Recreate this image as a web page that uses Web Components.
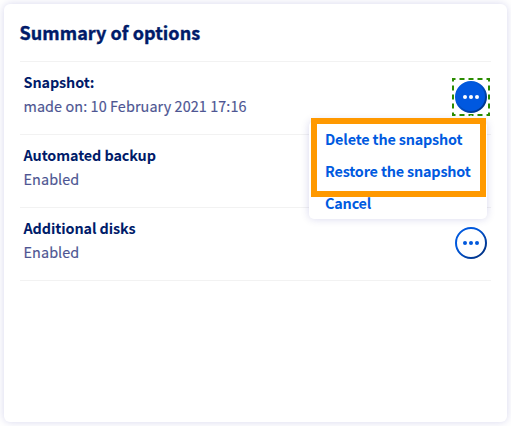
<!DOCTYPE html>
<html lang="en">
<head>
<meta charset="utf-8">
<title>Summary of options</title>
<style>
body { margin: 0; background: #fff; font-family: "Noto Sans CJK SC", "Noto Sans", sans-serif; color: #001b69; overflow: hidden; }
</style>
</head>
<body>
<summary-card heading="Summary of options">
  <option-row label="Snapshot:" value="made on: 10 February 2021 17:16">
    <more-button slot="action" active></more-button>
    <action-menu slot="menu">
      <menu-entry>Delete the snapshot</menu-entry>
      <menu-entry>Restore the snapshot</menu-entry>
      <menu-entry>Cancel</menu-entry>
    </action-menu>
  </option-row>
  <option-row label="Automated backup" value="Enabled"></option-row>
  <option-row label="Additional disks" value="Enabled">
    <more-button slot="action"></more-button>
  </option-row>
</summary-card>
<script>
class SummaryCard extends HTMLElement {
  connectedCallback() {
    this.attachShadow({ mode: "open" }).innerHTML = `
      <style>
        :host { display: block; box-sizing: border-box; width: 503px; height: 418px; margin: 4px; padding: 0 16px;
          background: #fff; border-radius: 6px; box-shadow: 0 0 8px rgba(0, 0, 140, .16); }
        h2 { margin: 0 0 0 -.5px; height: 57px; line-height: 57px; font-size: 18px; font-weight: 700; white-space: nowrap;
          letter-spacing: .06px; -webkit-text-stroke: .4px currentColor; }
        .rows { border-bottom: 1px solid #f2f2f2; width: 471px; }
      </style>
      <h2></h2><div class="rows"><slot></slot></div>`;
    this.shadowRoot.querySelector("h2").textContent = this.getAttribute("heading");
  }
}
class OptionRow extends HTMLElement {
  connectedCallback() {
    this.attachShadow({ mode: "open" }).innerHTML = `
      <style>
        :host { display: flex; position: relative; box-sizing: border-box; height: 73px; border-top: 1px solid #f2f2f2;
          padding: 8px 1px 0 3.5px; justify-content: space-between; }
        .text { display: grid; grid-template-rows: 24px 24px; line-height: 24px; white-space: nowrap; align-content: start; }
        .label { font-size: 14.4px; font-weight: 700; letter-spacing: -.1px; }
        .value { font-size: 14.4px; color: #4d5592; letter-spacing: .09px; -webkit-text-stroke: .15px currentColor; }
        .action { padding-top: 8px; }
      </style>
      <div class="text"><span class="label"></span><span class="value"></span></div>
      <div class="action"><slot name="action"></slot></div>
      <slot name="menu"></slot>`;
    this.shadowRoot.querySelector(".label").textContent = this.getAttribute("label");
    this.shadowRoot.querySelector(".value").textContent = this.getAttribute("value");
  }
}
class MoreButton extends HTMLElement {
  connectedCallback() {
    const on = this.hasAttribute("active");
    this.attachShadow({ mode: "open" }).innerHTML = `
      <style>:host { display: block; width: 38px; height: 38px; } svg { display: block; }</style>
      <svg width="38" height="38" viewBox="0 0 38 38">
        <defs><linearGradient id="g" x1="0" y1="0" x2="1" y2="1">
          <stop offset=".35" stop-color="#0058dc"/><stop offset=".85" stop-color="#00358c"/></linearGradient></defs>
        ${on ? `<rect x="1" y="1" width="36" height="36" fill="none" stroke="#2b8c00" stroke-width="2" stroke-dasharray="5 4" stroke-dashoffset="2.5"/>` : ""}
        <circle cx="19" cy="19" r="15" fill="${on ? "#0058e0" : "#fff"}" stroke="url(#g)" stroke-width="2"/>
        <g fill="${on ? "#fff" : "#0058dc"}"><circle cx="13" cy="19" r="2"/><circle cx="19" cy="19" r="2"/><circle cx="25" cy="19" r="2"/></g>
      </svg>`;
  }
}
class ActionMenu extends HTMLElement {
  connectedCallback() {
    this.attachShadow({ mode: "open" }).innerHTML = `
      <style>
        :host { display: block; position: absolute; z-index: 2; left: 289px; top: 59px; box-sizing: border-box; width: 178px; height: 98px;
          padding: 2px 16px 0; background: #fff; border-radius: 5px; box-shadow: 0 0 8px rgba(0, 0, 140, .16); }
        .tip { position: absolute; left: 156px; top: -6px; width: 12px; height: 6px; background: #f8f8ff; clip-path: polygon(50% 0, 100% 100%, 0 100%); }
        .frame { position: absolute; left: 2px; top: -3px; box-sizing: border-box; width: 175px; height: 79px; border: 6px solid #ff9900; }
      </style>
      <div class="tip"></div><slot></slot><div class="frame"></div>`;
  }
}
class MenuEntry extends HTMLElement {
  connectedCallback() {
    this.attachShadow({ mode: "open" }).innerHTML = `
      <style>:host { display: block; height: 32px; line-height: 32px; font-size: 14.4px; font-weight: 700; letter-spacing: -.18px; color: #005ae0; white-space: nowrap; }</style>
      <slot></slot>`;
  }
}
customElements.define("summary-card", SummaryCard);
customElements.define("option-row", OptionRow);
customElements.define("more-button", MoreButton);
customElements.define("action-menu", ActionMenu);
customElements.define("menu-entry", MenuEntry);
</script>
</body>
</html>
